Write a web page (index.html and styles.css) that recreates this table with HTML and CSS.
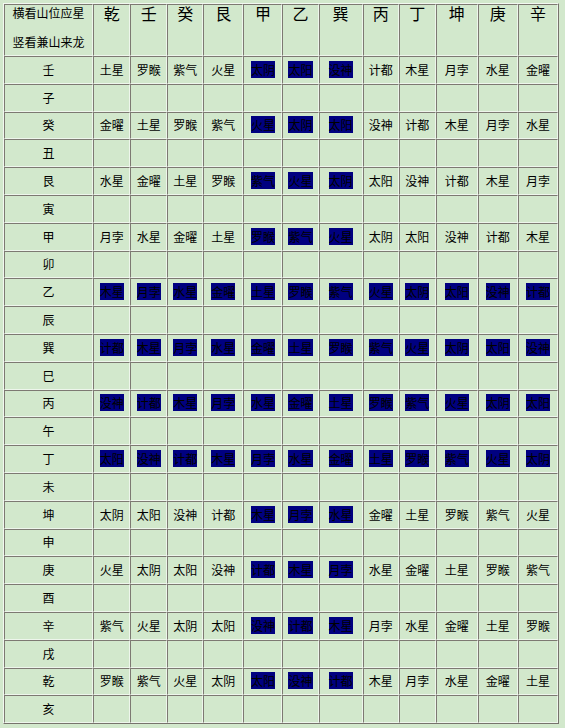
FILE: index.html
```html
<!DOCTYPE html>
<html lang="zh-CN">
<head>
<meta charset="utf-8">
<title>山位应星</title>
<link rel="stylesheet" href="styles.css">
</head>
<body>
<table class="grid">
<colgroup>
<col class="w89"><col class="w37"><col class="w37"><col class="w36"><col class="w40"><col class="w39"><col class="w36"><col class="w44"><col class="w36"><col class="w37"><col class="w42"><col class="w40"><col class="w40">
</colgroup>
<thead>
<tr class="head">
<th class="corner"><div class="l1">横看山位应星</div><div class="l2">竖看兼山来龙</div></th>
<th>乾</th><th>壬</th><th>癸</th><th>艮</th><th>甲</th><th>乙</th><th>巽</th><th>丙</th><th>丁</th><th>坤</th><th>庚</th><th>辛</th>
</tr>
</thead>
<tbody>
<tr><td>壬</td><td>土星</td><td>罗睺</td><td>紫气</td><td>火星</td><td><span class="hl">太阴</span></td><td><span class="hl">太阳</span></td><td><span class="hl">没神</span></td><td>计都</td><td>木星</td><td>月孛</td><td>水星</td><td>金曜</td></tr>
<tr><td>子</td><td></td><td></td><td></td><td></td><td></td><td></td><td></td><td></td><td></td><td></td><td></td><td></td></tr>
<tr><td>癸</td><td>金曜</td><td>土星</td><td>罗睺</td><td>紫气</td><td><span class="hl">火星</span></td><td><span class="hl">太阴</span></td><td><span class="hl">太阳</span></td><td>没神</td><td>计都</td><td>木星</td><td>月孛</td><td>水星</td></tr>
<tr><td>丑</td><td></td><td></td><td></td><td></td><td></td><td></td><td></td><td></td><td></td><td></td><td></td><td></td></tr>
<tr><td>艮</td><td>水星</td><td>金曜</td><td>土星</td><td>罗睺</td><td><span class="hl">紫气</span></td><td><span class="hl">火星</span></td><td><span class="hl">太阴</span></td><td>太阳</td><td>没神</td><td>计都</td><td>木星</td><td>月孛</td></tr>
<tr><td>寅</td><td></td><td></td><td></td><td></td><td></td><td></td><td></td><td></td><td></td><td></td><td></td><td></td></tr>
<tr><td>甲</td><td>月孛</td><td>水星</td><td>金曜</td><td>土星</td><td><span class="hl">罗睺</span></td><td><span class="hl">紫气</span></td><td><span class="hl">火星</span></td><td>太阴</td><td>太阳</td><td>没神</td><td>计都</td><td>木星</td></tr>
<tr><td>卯</td><td></td><td></td><td></td><td></td><td></td><td></td><td></td><td></td><td></td><td></td><td></td><td></td></tr>
<tr><td>乙</td><td><span class="hl">木星</span></td><td><span class="hl">月孛</span></td><td><span class="hl">水星</span></td><td><span class="hl">金曜</span></td><td><span class="hl">土星</span></td><td><span class="hl">罗睺</span></td><td><span class="hl">紫气</span></td><td><span class="hl">火星</span></td><td><span class="hl">太阴</span></td><td><span class="hl">太阳</span></td><td><span class="hl">没神</span></td><td><span class="hl">计都</span></td></tr>
<tr><td>辰</td><td></td><td></td><td></td><td></td><td></td><td></td><td></td><td></td><td></td><td></td><td></td><td></td></tr>
<tr><td>巽</td><td><span class="hl">计都</span></td><td><span class="hl">木星</span></td><td><span class="hl">月孛</span></td><td><span class="hl">水星</span></td><td><span class="hl">金曜</span></td><td><span class="hl">土星</span></td><td><span class="hl">罗睺</span></td><td><span class="hl">紫气</span></td><td><span class="hl">火星</span></td><td><span class="hl">太阴</span></td><td><span class="hl">太阳</span></td><td><span class="hl">没神</span></td></tr>
<tr><td>巳</td><td></td><td></td><td></td><td></td><td></td><td></td><td></td><td></td><td></td><td></td><td></td><td></td></tr>
<tr><td>丙</td><td><span class="hl">没神</span></td><td><span class="hl">计都</span></td><td><span class="hl">木星</span></td><td><span class="hl">月孛</span></td><td><span class="hl">水星</span></td><td><span class="hl">金曜</span></td><td><span class="hl">土星</span></td><td><span class="hl">罗睺</span></td><td><span class="hl">紫气</span></td><td><span class="hl">火星</span></td><td><span class="hl">太阴</span></td><td><span class="hl">太阳</span></td></tr>
<tr><td>午</td><td></td><td></td><td></td><td></td><td></td><td></td><td></td><td></td><td></td><td></td><td></td><td></td></tr>
<tr><td>丁</td><td><span class="hl">太阳</span></td><td><span class="hl">没神</span></td><td><span class="hl">计都</span></td><td><span class="hl">木星</span></td><td><span class="hl">月孛</span></td><td><span class="hl">水星</span></td><td><span class="hl">金曜</span></td><td><span class="hl">土星</span></td><td><span class="hl">罗睺</span></td><td><span class="hl">紫气</span></td><td><span class="hl">火星</span></td><td><span class="hl">太阴</span></td></tr>
<tr><td>未</td><td></td><td></td><td></td><td></td><td></td><td></td><td></td><td></td><td></td><td></td><td></td><td></td></tr>
<tr><td>坤</td><td>太阴</td><td>太阳</td><td>没神</td><td>计都</td><td><span class="hl">木星</span></td><td><span class="hl">月孛</span></td><td><span class="hl">水星</span></td><td>金曜</td><td>土星</td><td>罗睺</td><td>紫气</td><td>火星</td></tr>
<tr><td>申</td><td></td><td></td><td></td><td></td><td></td><td></td><td></td><td></td><td></td><td></td><td></td><td></td></tr>
<tr><td>庚</td><td>火星</td><td>太阴</td><td>太阳</td><td>没神</td><td><span class="hl">计都</span></td><td><span class="hl">木星</span></td><td><span class="hl">月孛</span></td><td>水星</td><td>金曜</td><td>土星</td><td>罗睺</td><td>紫气</td></tr>
<tr><td>酉</td><td></td><td></td><td></td><td></td><td></td><td></td><td></td><td></td><td></td><td></td><td></td><td></td></tr>
<tr><td>辛</td><td>紫气</td><td>火星</td><td>太阴</td><td>太阳</td><td><span class="hl">没神</span></td><td><span class="hl">计都</span></td><td><span class="hl">木星</span></td><td>月孛</td><td>水星</td><td>金曜</td><td>土星</td><td>罗睺</td></tr>
<tr><td>戌</td><td></td><td></td><td></td><td></td><td></td><td></td><td></td><td></td><td></td><td></td><td></td><td></td></tr>
<tr><td>乾</td><td>罗睺</td><td>紫气</td><td>火星</td><td>太阴</td><td><span class="hl">太阳</span></td><td><span class="hl">没神</span></td><td><span class="hl">计都</span></td><td>木星</td><td>月孛</td><td>水星</td><td>金曜</td><td>土星</td></tr>
<tr><td>亥</td><td></td><td></td><td></td><td></td><td></td><td></td><td></td><td></td><td></td><td></td><td></td><td></td></tr>
</tbody>
</table>
</body>
</html>
```

FILE: styles.css
```css
html, body {
  margin: 0;
  padding: 0;
  background: #d2e8cc;
}

body {
  padding: 3px;
  font-family: "Noto Sans CJK SC", "Noto Sans", sans-serif;
  font-size: 12px;
  color: #000;
}

.grid {
  table-layout: fixed;
  width: 556px;
  border-collapse: separate;
  border-spacing: 0;
  border: 1px solid;
  border-color: #f2f8f0 #77736c #77736c #f2f8f0;
  background: #d2e8cc;
}

.w89 { width: 89px; }
.w44 { width: 44px; }
.w42 { width: 42px; }
.w40 { width: 40px; }
.w39 { width: 39px; }
.w37 { width: 37px; }
.w36 { width: 36px; }

.grid th,
.grid td {
  border: 1px solid;
  border-color: #7d7972 #eef6ec #eef6ec #7d7972;
  padding: 0;
  text-align: center;
  font-weight: normal;
}

.head {
  height: 52px;
}

.head th {
  vertical-align: top;
  font-size: 16px;
  line-height: 16px;
}

.head th.corner {
  font-size: 12px;
  line-height: 16px;
}

.corner .l2 {
  margin-top: 13px;
}

.grid tbody tr {
  height: 27.8px;
}

.grid td {
  vertical-align: middle;
  line-height: 18px;
}

.hl {
  background: #000080;
  color: #000;
}
```
